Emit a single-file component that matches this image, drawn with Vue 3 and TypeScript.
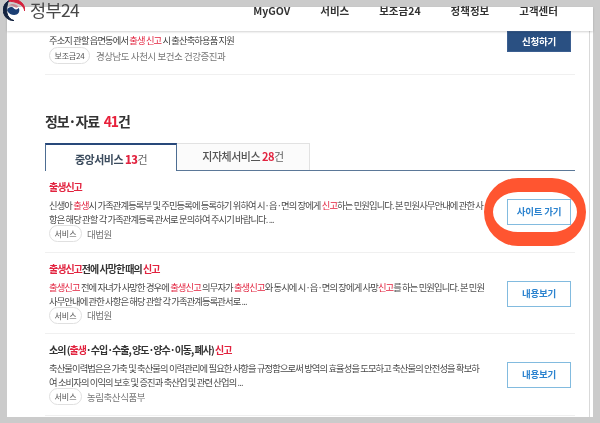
<script setup lang="ts">
interface Part { t: string; hl: boolean }
interface Item {
  title: string
  lines: string[]
  badge: string
  org: string
  action: string
  ring: boolean
}

function parts(s: string): Part[] {
  return s
    .split(/(\[[^\]]*\])/)
    .filter(Boolean)
    .map((t) => (t.startsWith('[') ? { t: t.slice(1, -1), hl: true } : { t, hl: false }))
}

const nav = ['MyGOV', '서비스', '보조금24', '정책정보', '고객센터']

const items: Item[] = [
  {
    title: '[출생신고]',
    lines: [
      '신생아 [출생]시 가족관계등록부 및 주민등록에 등록하기 위하여 시·읍·면의 장에게 [신고]하는 민원입니다. 본 민원사무안내에 관한 사',
      '항은 해당 관할 각 가족관계등록 관서로 문의하여 주시기 바랍니다. ...'
    ],
    badge: '서비스',
    org: '대법원',
    action: '사이트 가기',
    ring: true
  },
  {
    title: '[출생신고]전에 사망한 때의 [신고]',
    lines: [
      '[출생신고] 전에 자녀가 사망한 경우에 [출생신고] 의무자가 [출생신고]와 동시에 시·읍·면의 장에게 사망[신고]를 하는 민원입니다. 본 민원',
      '사무안내에 관한 사항은 해당 관할 각 가족관계등록관서로 ...'
    ],
    badge: '서비스',
    org: '대법원',
    action: '내용보기',
    ring: false
  },
  {
    title: '소의 ([출생]·수입·수출, 양도·양수·이동, 폐사) [신고]',
    lines: [
      '축산물이력법은은 가축 및 축산물의 이력관리에 필요한 사항을 규정함으로써 방역의 효율성을 도모하고 축산물의 안전성을 확보하',
      '여 소비자의 이익의 보호 및 증진과 축산업 및 관련 산업의 ...'
    ],
    badge: '서비스',
    org: '농림축산식품부',
    action: '내용보기',
    ring: false
  }
]

const intro = parts('주소지 관할 읍면동에서 [출생 신고] 시 출산축하용품 지원')
</script>

<template>
  <div class="page">
    <header class="header">
      <div class="brand">
        <svg class="mark" viewBox="0 0 22 22" width="22" height="22" aria-hidden="true">
          <path d="M5 2.4A10.8 10.8 0 0 1 21.8 12C21.2 9.2 19.4 6.2 16 4.6C12 2.8 8 2 5 2.4Z" fill="#d5213d" stroke="#d5213d" />
          <path d="M5.5 1.8A10.6 10.6 0 0 0 1.8 16.8C3.6 20 7.4 21.8 11 21.6C7 20.4 4.4 17.4 3.9 13.6C3.4 9.4 4.2 4.6 5.5 1.8Z" fill="#14233f" stroke="#14233f" />
          <path d="M4 11.2C5.2 7.6 9 7 11 9.4C12.4 11 14.6 10.8 15.6 8.8C17 11 16.4 14.4 13.6 15.6C10.6 16.9 6 15.6 4 11.2Z" fill="#1c3f74" />
          <path d="M5.5 7C8 4.2 12.4 4.4 15.4 7.6C13.8 9.6 12.6 9 11.2 7.8C9.6 6.4 7.4 6.2 5.5 7Z" fill="#c63a50" opacity=".45" />
        </svg>
        <span class="wordmark">정부24</span>
      </div>
      <nav class="nav">
        <a v-for="n in nav" :key="n" class="nav-link">{{ n }}</a>
      </nav>
    </header>

    <main class="panel">
      <section class="content">
        <div class="intro">
          <div class="intro-text">
            <p class="intro-line">
              <span v-for="(p, i) in intro" :key="i" :class="{ hl: p.hl }">{{ p.t }}</span>
            </p>
            <div class="meta">
              <span class="badge badge-wide">보조금24</span>
              <span class="org">경상남도 사천시 보건소 건강증진과</span>
            </div>
          </div>
          <button class="apply">신청하기</button>
        </div>

        <h2 class="heading">정보·자료 <b class="count">41</b>건</h2>

        <div class="tabs">
          <div class="tab active">중앙서비스 <b class="hl">13</b><span class="unit">건</span></div>
          <div class="tab">지자체서비스 <b class="hl">28</b><span class="unit">건</span></div>
        </div>

        <article v-for="item in items" :key="item.title + item.org" class="row">
          <div class="row-text">
            <h3 class="title">
              <span v-for="(p, i) in parts(item.title)" :key="i" :class="{ hl: p.hl }">{{ p.t }}</span>
            </h3>
            <p v-for="(line, li) in item.lines" :key="li" class="desc">
              <span v-for="(p, i) in parts(line)" :key="i" :class="{ hl: p.hl }">{{ p.t }}</span>
            </p>
            <div class="meta meta-row">
              <span class="badge">{{ item.badge }}</span>
              <span class="org">{{ item.org }}</span>
            </div>
          </div>
          <button class="action">
            {{ item.action }}
            <span v-if="item.ring" class="ring"></span>
          </button>
        </article>
      </section>
    </main>
  </div>
</template>

<style>
html, body { margin: 0; background: #cbcbcb; }
</style>

<style scoped>
.page {
  width: 600px;
  height: 423px;
  overflow: hidden;
  background: #cbcbcb;
  font-family: "Noto Sans CJK KR", "Noto Sans", sans-serif;
  color: #444;
  filter: blur(0.35px);
  display: flex;
  flex-direction: column;
}
.header {
  position: relative;
  z-index: 2;
  height: 31px;
  flex: none;
  display: flex;
  align-items: flex-start;
}
.header::before {
  content: "";
  position: absolute;
  inset: 7px 7px 0 7px;
  background: #fff;
  box-shadow: 0 1px 2px rgba(0, 0, 0, 0.18);
}
.brand {
  position: relative;
  display: flex;
  align-items: flex-start;
  gap: 5px;
  margin-left: 3px;
  margin-top: -1px;
}
.mark { flex: none; }
.wordmark {
  margin-top: 1px;
  font-size: 17.5px;
  line-height: 20px;
  letter-spacing: -0.6px;
  color: #484848;
  font-weight: 400;
}
.nav {
  position: relative;
  display: flex;
  gap: 30px;
  margin-left: 174px;
  margin-top: 3px;
}
.nav-link {
  font-size: 10.5px;
  font-weight: 700;
  line-height: 16px;
  color: #333;
  white-space: nowrap;
}
.panel {
  flex: none;
  height: 386px;
  width: 582px;
  margin-left: 7px;
  background: #fff;
  border-right: 1px solid #d9d9d9;
  box-shadow: 3px 0 0 #fff;
  overflow: hidden;
}
.content {
  margin-left: 38px;
  width: 530px;
}
.intro {
  height: 43px;
  border-bottom: 1px solid #f0f0f0;
  display: flex;
  justify-content: space-between;
  align-items: flex-start;
  padding: 0 4px 0 4px;
}
.intro-line {
  margin: 2px 0 0;
  font-size: 9.3px;
  line-height: 14px;
  letter-spacing: -0.88px;
  color: #444;
  white-space: nowrap;
}
.apply {
  width: 64px;
  height: 21px;
  border: 1px solid #3b5f91;
  background: #2a5082;
  color: #fff;
  font: 700 9.5px/1 "Noto Sans CJK KR", sans-serif;
  letter-spacing: -0.3px;
  padding: 0;
}
.meta {
  display: flex;
  align-items: center;
  gap: 6px;
  margin-top: 0;
}
.meta-row { margin-top: -1px; gap: 5px; }
.badge {
  box-sizing: border-box;
  width: 33px;
  height: 17px;
  border: 1px solid #e0e0e0;
  border-radius: 9px;
  font-size: 8px;
  line-height: 15px;
  text-align: center;
  color: #555;
}
.badge-wide { width: 41px; letter-spacing: -0.2px; }
.org {
  font-size: 9.5px;
  line-height: 14px;
  letter-spacing: -0.45px;
  color: #777;
  white-space: nowrap;
}
.heading {
  margin: 36px 0 0;
  height: 32px;
  font-size: 14px;
  line-height: 20px;
  font-weight: 700;
  color: #333;
  letter-spacing: -1.2px;
}
.count { color: #e8203a; margin-left: 3px; font-weight: 700; }
.tabs {
  display: flex;
  height: 27px;
  border-bottom: 1px solid #5b7898;
}
.tab {
  box-sizing: border-box;
  width: 133px;
  height: 27px;
  border: 1px solid #e2e2e2;
  border-bottom: 0;
  border-left: 0;
  background: #fbfbfb;
  text-align: center;
  font-size: 11px;
  line-height: 25px;
  letter-spacing: -0.5px;
  color: #555;
  font-weight: 500;
}
.tab.active {
  position: relative;
  width: 132px;
  height: 28px;
  border: 1px solid #4d6d92;
  border-top: 2px solid #28487a;
  border-bottom: 0;
  background: #fff;
  color: #3c4c5e;
  font-weight: 700;
  line-height: 28px;
}
.unit { font-weight: 400; color: #666; }
.hl { color: #e2233f; }
.row {
  box-sizing: border-box;
  height: 81.5px;
  border-bottom: 1px solid #f0f0f0;
  padding: 8px 4px 0 4px;
  display: flex;
  justify-content: space-between;
}
.row-text { width: 440px; }
.title {
  margin: 0 0 3px;
  font-size: 10px;
  line-height: 16px;
  font-weight: 700;
  letter-spacing: -1px;
  color: #333;
  white-space: nowrap;
}
.desc {
  margin: 0;
  font-size: 9.3px;
  line-height: 14px;
  letter-spacing: -0.88px;
  color: #4a4a4a;
  white-space: nowrap;
}
.action {
  position: relative;
  flex: none;
  box-sizing: border-box;
  width: 64px;
  height: 26px;
  margin-top: 20px;
  border: 1px solid #82bbdf;
  background: #fff;
  color: #2c83cf;
  font: 700 9.5px/1 "Noto Sans CJK KR", sans-serif;
  letter-spacing: -0.2px;
  padding: 0;
}
.ring {
  position: absolute;
  left: -24px;
  right: -16px;
  top: -22px;
  bottom: -22px;
  border: solid #ff5530;
  border-width: 14px 9px;
  border-radius: 36px;
  pointer-events: none;
}
</style>
